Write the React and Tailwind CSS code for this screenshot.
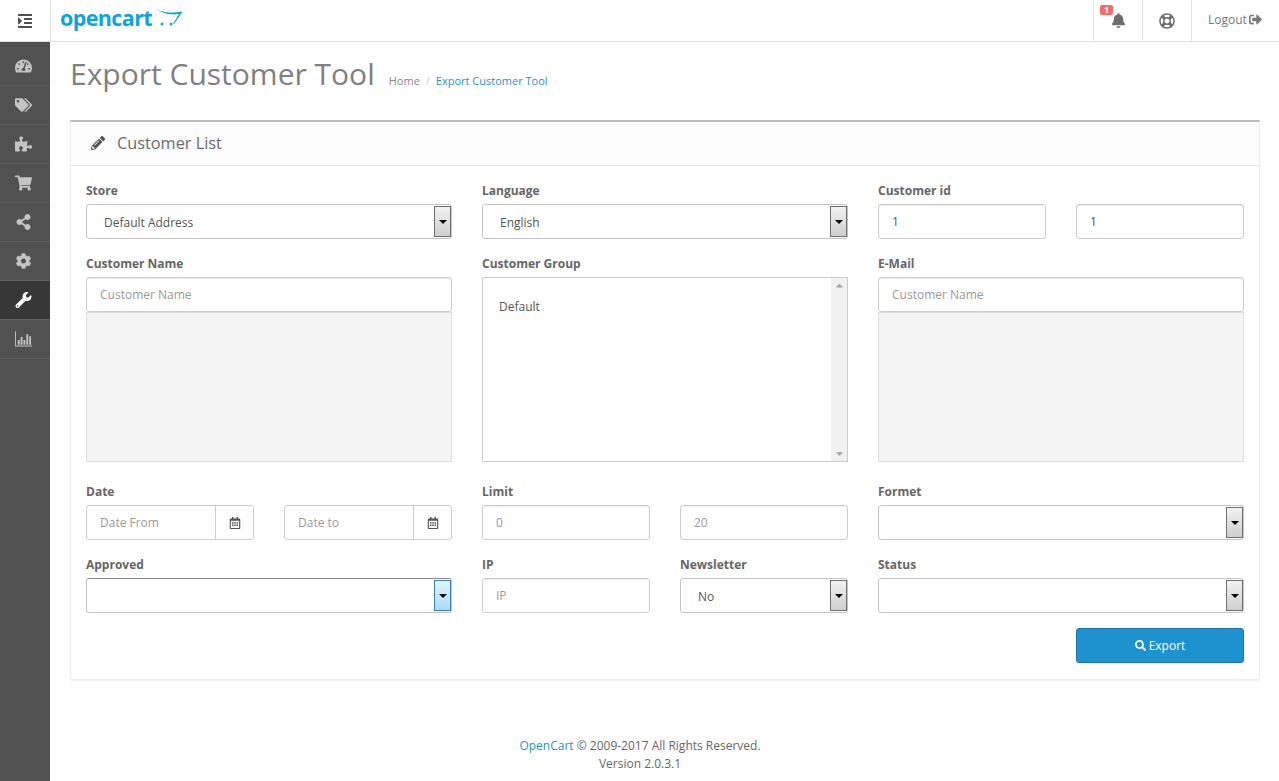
import React from 'react';
import {
  FaTachometerAlt, FaTags, FaPuzzlePiece, FaShoppingCart, FaShareAlt, FaCog, FaWrench,
  FaBell, FaRegLifeRing, FaSignOutAlt, FaPencilAlt, FaSearch, FaRegCalendarAlt,
  FaIndent, FaCaretUp, FaCaretDown,
} from 'react-icons/fa';

function ChartIcon({ className }) {
  return (
    <svg viewBox="0 0 18 16" className={className} fill="currentColor">
      <path d="M0 0h1v15h17v1H0z" />
      <path d="M3 9h2v5H3zM6 6h2v8H6zM9 9h2v5H9zM12 3h2v11h-2zM15 5h2v9h-2z" />
    </svg>
  );
}

const menu = [
  { icon: FaTachometerAlt },
  { icon: FaTags },
  { icon: FaPuzzlePiece },
  { icon: FaShoppingCart },
  { icon: FaShareAlt },
  { icon: FaCog },
  { icon: FaWrench, active: true },
  { icon: ChartIcon },
];

function Label({ children }) {
  return <label className="block h-[24px] pt-[1px] text-[12px] leading-[20px] font-bold text-[#666]">{children}</label>;
}

function Input({ placeholder, value, className = '' }) {
  return (
    <input
      readOnly
      placeholder={placeholder}
      value={value}
      className={`block h-[35px] w-full min-w-0 rounded-[3px] border border-[#ccc] bg-white px-[13px] text-[12px] text-[#555] shadow-[inset_0_1px_1px_rgba(0,0,0,0.075)] placeholder:text-[#999] outline-none ${className}`}
    />
  );
}

function Select({ value, focused, className = '' }) {
  return (
    <div className={`flex h-[35px] w-full items-stretch rounded-[3px] border border-[#c4c4c4] bg-white py-[1px] pl-[1px] ${focused ? 'border-t-[#8a8a8a]' : ''} ${className}`}>
      <div className="flex-1 pl-[16px] text-[12px] leading-[34px] text-[#555]">{value}</div>
      <div className={`flex w-[17px] items-center justify-center border ${focused ? 'border-[#3c7fb1] bg-gradient-to-b from-[#e3f4fc] to-[#a9dbf6]' : 'border-[#707070] bg-gradient-to-b from-[#f2f2f2] to-[#cfcfcf]'}`}>
        <span className="h-0 w-0 border-x-[4px] border-t-[4px] border-x-transparent border-t-black" />
      </div>
    </div>
  );
}

function DateInput({ placeholder }) {
  return (
    <div className="flex h-[35px] rounded-[3px] border border-[#ccc] bg-white">
      <input
        readOnly
        placeholder={placeholder}
        className="h-full w-[129px] min-w-0 border-r border-[#ccc] bg-transparent px-[13px] text-[12px] placeholder:text-[#999] outline-none"
      />
      <div className="flex flex-1 items-center justify-center text-[#555]">
        <FaRegCalendarAlt className="h-[12px] w-[12px]" />
      </div>
    </div>
  );
}

export default function App() {
  return (
    <div className="flex h-[781px] flex-col overflow-hidden bg-white font-['Open_Sans',sans-serif] text-[12px] text-[#666]">
      {/* Header */}
      <header className="flex h-[42px] shrink-0 border-b border-[#e1e1e1] bg-white">
        <div className="flex w-[51px] items-center justify-center border-r border-[#e1e1e1] text-[#4e4e4e]">
          <FaIndent className="h-[16px] w-[16px]" />
        </div>
        <div className="flex items-start pl-[9px]">
          <span className="mt-[1px] text-[21.5px] leading-[34px] font-bold tracking-[-0.6px] text-[#0fa3dd]">opencart</span>
          <svg width="28" height="20" viewBox="0 0 28 20" className="mt-[7px] ml-[3px]" fill="#0fa3dd">
            <path d="M0 1 C5 5 16 7 27 4.500 L27 5.500 L19 17 L18 17 L24 7 C15 8.500 6 6 0 1 Z" />
            <circle cx="7" cy="17" r="1.500" />
            <circle cx="16" cy="17" r="1.500" />
          </svg>
        </div>
        <div className="ml-auto flex">
          <div className="relative flex w-[49px] items-center justify-center border-l border-[#e1e1e1] text-[#6d6d6d]">
            <FaBell className="h-[15px] w-[15px]" />
            <span className="absolute top-[5px] left-[6px] h-[10px] w-[13px] rounded-[2px] bg-[#f56b6b] text-center text-[9px] leading-[10px] font-bold text-white">1</span>
          </div>
          <div className="flex w-[49px] items-center justify-center border-l border-[#e1e1e1] text-[#6d6d6d]">
            <FaRegLifeRing className="h-[16px] w-[16px]" />
          </div>
          <div className="flex w-[88px] items-center gap-[2px] border-l border-[#e1e1e1] pb-[2px] pl-[16px] text-[#777]">
            <span>Logout</span>
            <FaSignOutAlt className="h-[13px] w-[13px]" />
          </div>
        </div>
      </header>

      <div className="flex flex-1">
        {/* Sidebar */}
        <aside className="w-[50px] shrink-0 bg-[#515151] pt-[5px]">
          {menu.map(({ icon: Icon, active }, i) => (
            <div
              key={i}
              className={`flex h-[39px] items-center justify-center border-b border-[#5e5e5e] pr-[3px] ${active ? 'bg-[#373737] text-white' : 'text-[#c4c4c4]'}`}
            >
              <Icon className="h-[16px] w-[17px]" />
            </div>
          ))}
        </aside>

        <main className="flex flex-1 flex-col pr-[19px] pl-[20px]">
          {/* Page title */}
          <div className="flex h-[78px] items-center">
            <h1 className="mb-[14px] text-[30px] leading-[36px] font-normal text-[#808080]">Export Customer Tool</h1>
            <div className="ml-[14px] text-[11px] text-[#888]">
              Home
              <span className="mx-[6px] text-[#ccc]">/</span>
              <span className="text-[#1e91cf]">Export Customer Tool</span>
            </div>
          </div>

          {/* Panel */}
          <section className="h-[560px] border-x border-b border-t-2 border-x-[#eee] border-b-[#eee] border-t-[#bbb] shadow-[0_1px_1px_rgba(0,0,0,0.05)]">
            <div className="flex h-[44px] items-center border-b border-[#e8e8e8] bg-[#fcfcfc] pb-[1px] pl-[20px] text-[16.3px] text-[#6b6b6b]">
              <FaPencilAlt className="mr-[12px] h-[14px] w-[14px] text-[#555]" />
              Customer List
            </div>

            <div className="grid grid-cols-3 gap-x-[30px] px-[15px] pt-[14px]">
              <div>
                <Label>Store</Label>
                <Select value="Default Address" />
              </div>
              <div>
                <Label>Language</Label>
                <Select value="English" />
              </div>
              <div>
                <Label>Customer id</Label>
                <div className="grid grid-cols-2 gap-x-[30px]">
                  <Input value="1" />
                  <Input value="1" />
                </div>
              </div>

              <div className="mt-[14px]">
                <Label>Customer Name</Label>
                <Input placeholder="Customer Name" />
                <div className="h-[150px] border border-[#ddd] bg-[#f4f4f4]" />
              </div>
              <div className="mt-[14px]">
                <Label>Customer Group</Label>
                <div className="flex h-[185px] border border-[#ccc] bg-white">
                  <div className="flex-1 pt-[20px] pl-[16px] text-[12px] text-[#555]">Default</div>
                  <div className="flex w-[16px] flex-col items-center justify-between bg-[#f1f1f1] py-[2px] text-[#a3a3a3]">
                    <FaCaretUp className="h-[11px] w-[11px]" />
                    <FaCaretDown className="h-[11px] w-[11px]" />
                  </div>
                </div>
              </div>
              <div className="mt-[14px]">
                <Label>E-Mail</Label>
                <Input placeholder="Customer Name" />
                <div className="h-[150px] border border-[#ddd] bg-[#f4f4f4]" />
              </div>

              <div className="mt-[19px]">
                <Label>Date</Label>
                <div className="grid grid-cols-2 gap-x-[30px]">
                  <DateInput placeholder="Date From" />
                  <DateInput placeholder="Date to" />
                </div>
              </div>
              <div className="mt-[19px]">
                <Label>Limit</Label>
                <div className="grid grid-cols-2 gap-x-[30px]">
                  <Input placeholder="0" />
                  <Input placeholder="20" />
                </div>
              </div>
              <div className="mt-[19px]">
                <Label>Formet</Label>
                <Select />
              </div>

              <div className="mt-[14px]">
                <Label>Approved</Label>
                <Select focused />
              </div>
              <div className="mt-[14px] grid grid-cols-2 gap-x-[30px]">
                <div>
                  <Label>IP</Label>
                  <Input placeholder="IP" />
                </div>
                <div>
                  <Label>Newsletter</Label>
                  <Select value="No" />
                </div>
              </div>
              <div className="mt-[14px]">
                <Label>Status</Label>
                <Select />
              </div>

              <div className="col-start-3 mt-[15px] grid grid-cols-2 gap-x-[30px]">
                <button className="col-start-2 flex h-[35px] items-center justify-center gap-[3px] rounded-[3px] border border-[#1978ab] bg-[#1e91cf] text-[12px] text-white">
                  <FaSearch className="h-[11px] w-[11px]" />
                  Export
                </button>
              </div>
            </div>
          </section>

          {/* Footer */}
          <footer className="mt-[57px] mr-[50px] text-center text-[12px] leading-[18px] text-[#666]">
            <span className="text-[#1e91cf]">OpenCart</span> © 2009-2017 All Rights Reserved.
            <br />
            Version 2.0.3.1
          </footer>
        </main>
      </div>
    </div>
  );
}
